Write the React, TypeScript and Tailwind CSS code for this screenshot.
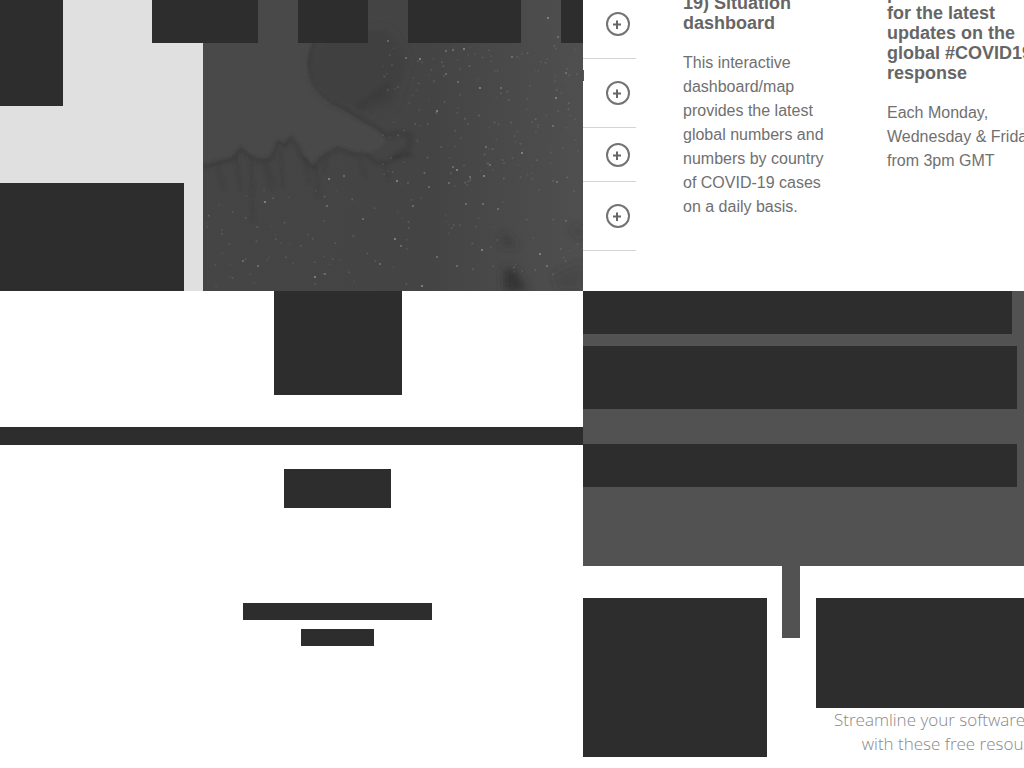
const bright: [number, number][] = [
  [62, 202], [55, 266], [40, 261], [126, 179], [141, 176], [122, 274], [112, 277], [124, 206], [160, 219],
  [194, 181], [185, 41], [203, 58], [217, 59], [243, 51], [250, 50], [261, 49], [243, 74], [255, 82],
  [277, 88], [298, 88], [309, 57], [345, 18], [355, 37], [363, 73], [353, 98], [350, 126], [283, 147],
  [234, 111], [226, 187], [250, 167], [254, 170], [246, 183], [267, 177], [281, 176], [263, 204],
  [280, 204], [279, 250], [234, 257], [254, 266], [219, 286], [198, 246], [354, 182], [319, 153],
  [287, 165], [210, 206], [337, 254], [295, 209], [344, 266], [192, 239], [177, 264],
];

function noise(seed: number) {
  const value = Math.sin(seed * 127.1 + 311.7) * 43758.5453;
  return value - Math.floor(value);
}

const faint = Array.from({ length: 260 }, (_, i) => {
  const y = 45 + noise(i) * 242;
  const x = y > 190 ? noise(i + 500) * 376 : 180 + noise(i + 500) * 195;
  return [x, y, 0.08 + noise(i + 900) * 0.18];
});

function Landscape() {
  return (
    <svg className="h-full w-full" viewBox="0 0 380 291" preserveAspectRatio="xMinYMin slice" aria-hidden="true">
      <defs>
        <linearGradient id="ground" x1="0" y1="0" x2="1" y2="0">
          <stop offset="0" stopColor="#454545" />
          <stop offset="0.6" stopColor="#444444" />
          <stop offset="0.85" stopColor="#4b4b4b" />
          <stop offset="1" stopColor="#4f4f4f" />
        </linearGradient>
        <filter id="soft" x="-20%" y="-20%" width="140%" height="140%">
          <feGaussianBlur stdDeviation="1.6" />
        </filter>
        <filter id="softer" x="-30%" y="-30%" width="160%" height="160%">
          <feGaussianBlur stdDeviation="4" />
        </filter>
      </defs>
      <rect width="380" height="291" fill="url(#ground)" />
      <path
        d="M0 0H125L106 52Q103 82 130 103L163 122Q182 132 182 143Q172 154 155 153L135 147L120 156L110 166L96 153L88 138L75 144L67 159H55L38 148L29 157L0 164Z"
        fill="#4a4a4a"
        filter="url(#soft)"
      />
      <path d="M125 30H185L205 60L190 105L160 115L125 97Q105 78 107 58Z" fill="#414141" filter="url(#softer)" />
      <g fill="none" stroke="#363636" filter="url(#soft)">
        <path d="M112 43Q99 66 114 89Q124 102 140 108L163 122Q176 128 184 136" strokeWidth="2" opacity="0.8" />
        <path
          d="M0 167L12 164L22 161L30 159L38 149L46 156L56 161L68 159L72 150L75 142L82 146L88 138L95 147L99 156L110 168L116 160L124 154L135 148L150 154L163 155L172 162L182 164L192 158L209 154"
          strokeWidth="4"
          opacity="0.6"
        />
        <path d="M184 136Q199 130 208 137L205 149L190 158" strokeWidth="6" opacity="0.5" />
        <path d="M155 108L172 94L186 86M168 100L184 94" strokeWidth="5" opacity="0.5" />
        <path
          d="M15 166L21 190M33 158L38 190M48 160L50 222M60 162L68 190M64 160L72 186M77 152L80 187M101 157L107 183M113 166L115 198M124 156L121 172M156 158L163 178M181 160L186 180"
          strokeWidth="3"
          opacity="0.4"
        />
      </g>
      <g fill="#303030" filter="url(#softer)">
        <path d="M301 270L311 268L325 291H301Z" opacity="0.9" />
        <path d="M301 232L315 248L298 244Z" opacity="0.6" />
        <path d="M350 274L380 262V291H355Z" opacity="0.25" />
        <path d="M365 230L380 225V240Z" opacity="0.3" />
      </g>
      {faint.map(([x, y, opacity], i) => (
        <circle key={i} cx={x} cy={y} r="1" fill="#aaaaaa" opacity={opacity} />
      ))}
      {bright.map(([x, y], i) => (
        <circle key={i} cx={x} cy={y} r="1" fill="#a8a8a8" opacity={i % 3 === 0 ? 0.75 : 0.5} />
      ))}
    </svg>
  );
}

function Hero() {
  return (
    <section className="grid overflow-hidden">
      <div className="col-start-1 row-start-1 flex bg-[#e0e0e0] pl-[203px]">
        <Landscape />
      </div>
      <div className="z-10 col-start-1 row-start-1 flex flex-col justify-between">
        <div className="flex items-start">
          <div className="h-[106px] w-[63px] shrink-0 bg-[#2d2d2d]" />
          <div className="ml-[89px] flex h-[43px] flex-1 gap-10">
            <div className="w-[106px] shrink-0 bg-[#2d2d2d]" />
            <div className="w-[70px] shrink-0 bg-[#2d2d2d]" />
            <div className="w-[113px] shrink-0 bg-[#2d2d2d]" />
            <div className="flex-1 bg-[#2d2d2d]" />
          </div>
        </div>
        <div className="h-[108px] w-[184px] bg-[#2d2d2d]" />
      </div>
    </section>
  );
}

function PlusIcon() {
  return (
    <svg className="size-5" viewBox="0 0 20 20" fill="none" stroke="currentColor" strokeWidth="2" aria-hidden="true">
      <path d="M9 6.5V15M5 10.6H13" />
    </svg>
  );
}

const rows = ["h-[69px]", "h-[69px]", "h-[54px]", "h-[69px]"];

function Updates() {
  return (
    <section className="relative flex h-[291px] items-start overflow-hidden bg-white font-['Liberation_Sans',Arial,sans-serif] text-[#666666]">
      <span className="absolute left-0 top-[70px] h-[11px] w-px bg-[#555555]" />
      <ul className="-mt-2.5 w-[53px] shrink-0">
        {rows.map((height, i) => (
          <li key={i} className={`${height} flex items-center border-b border-[#d4d4d4] pl-[23px]`}>
            <button
              type="button"
              aria-label="Expand"
              className="flex size-6 items-center justify-center rounded-full border-2 border-[#737373] text-[#666666]"
            >
              <PlusIcon />
            </button>
          </li>
        ))}
      </ul>
      <article className="-mt-[7px] ml-[47px] w-[150px] shrink-0">
        <h2 className="text-lg/5 font-bold">19) Situation dashboard</h2>
        <p className="mt-[18px] text-base/6 text-[#707070]">
          This interactive dashboard/map provides the latest global numbers and numbers by country of COVID-19 cases on
          a daily basis.
        </p>
      </article>
      <article className="-mt-[17px] ml-[54px] w-[150px] shrink-0">
        <h2 className="text-lg/5 font-bold">
          press
          <br />
          for the latest updates on the global #COVID19 response
        </h2>
        <p className="mt-[18px] text-base/6 text-[#707070]">Each Monday, Wednesday &amp; Friday from 3pm GMT</p>
      </article>
    </section>
  );
}

function Centered() {
  return (
    <section className="flex flex-col bg-white">
      <div className="flex justify-center pl-[93px]">
        <div className="h-[104px] w-32 bg-[#2d2d2d]" />
      </div>
      <div className="mt-8 h-[18px] bg-[#2d2d2d]" />
      <div className="flex flex-col items-center pl-[92px] pt-6">
        <div className="h-[39px] w-[107px] bg-[#2d2d2d]" />
        <div className="mt-[95px] h-[17px] w-[189px] bg-[#2d2d2d]" />
        <div className="mt-[9px] h-[17px] w-[73px] bg-[#2d2d2d]" />
      </div>
    </section>
  );
}

function Resources() {
  return (
    <section className="flex flex-col overflow-hidden bg-white">
      <div className="bg-[#525252] pb-[79px] pr-[7px]">
        <div className="mr-[5px] h-[43px] bg-[#2d2d2d]" />
        <div className="mt-3 h-[63px] bg-[#2d2d2d]" />
        <div className="mt-[35px] h-[43px] bg-[#2d2d2d]" />
      </div>
      <div className="flex items-start">
        <div className="mt-8 h-[159px] w-[184px] shrink-0 bg-[#2d2d2d]" />
        <div className="ml-[15px] h-[72px] w-[18px] shrink-0 bg-[#525252]" />
        <div className="ml-4 mt-8 min-w-0 flex-1">
          <div className="h-[110px] bg-[#2d2d2d]" />
          <p className="ml-[18px] w-max whitespace-nowrap text-center font-['Open_Sans',sans-serif] text-[17px]/6 font-light text-[#888888]">
            Streamline your software project
            <br />
            with these free resources
          </p>
        </div>
      </div>
    </section>
  );
}

export default function App() {
  return (
    <main className="grid min-h-screen grid-cols-[583fr_441fr] grid-rows-[291px_1fr] overflow-hidden bg-white">
      <Hero />
      <Updates />
      <Centered />
      <Resources />
    </main>
  );
}
